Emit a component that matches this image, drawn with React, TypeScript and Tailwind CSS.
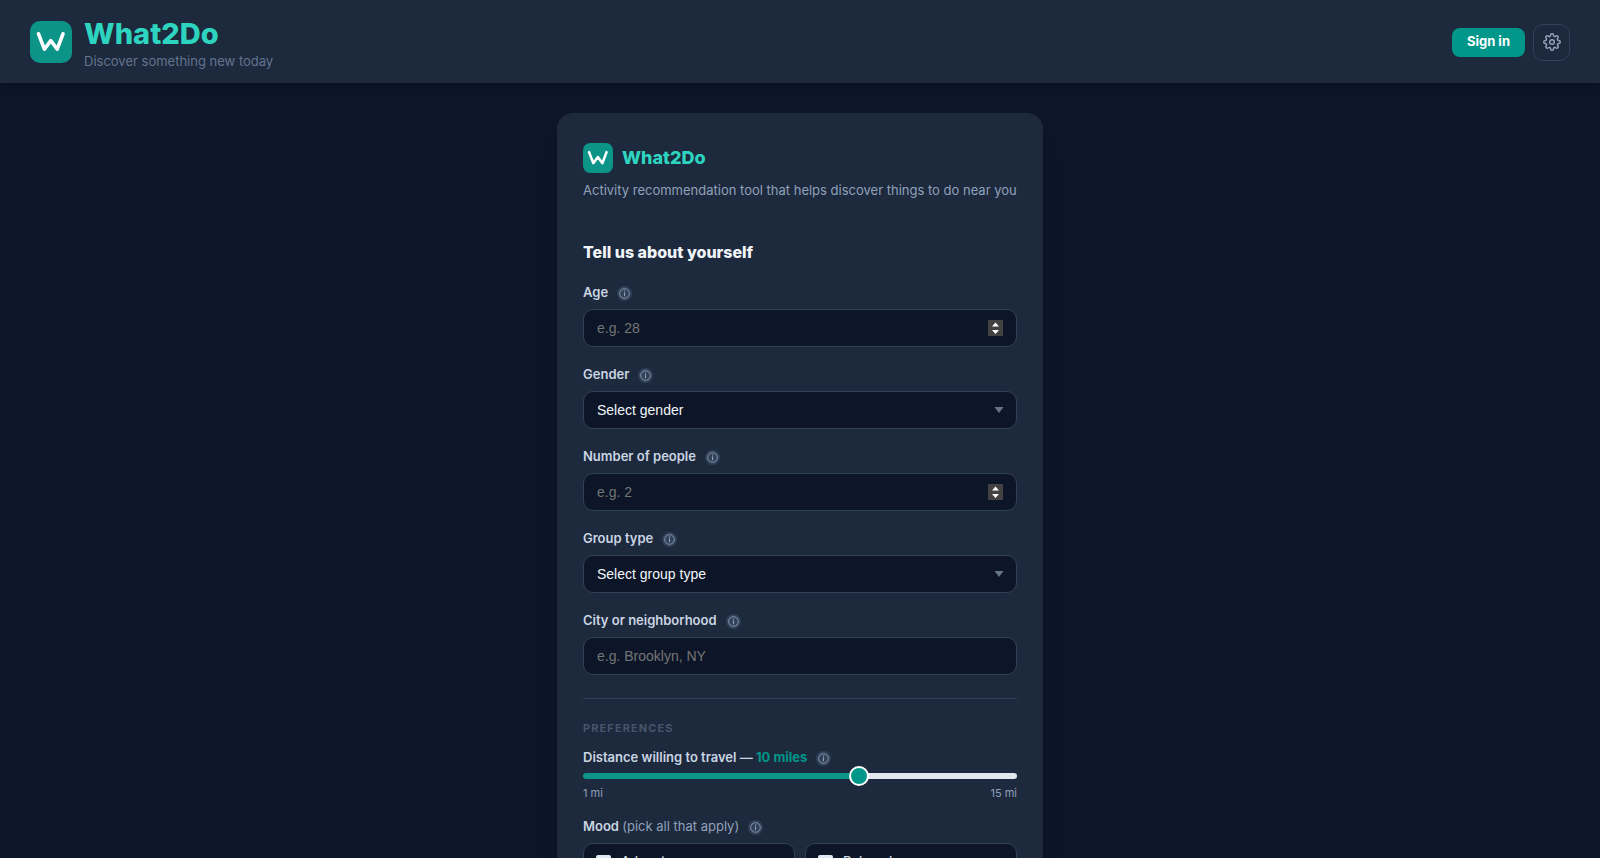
import { useState } from 'react'
import type { ReactNode } from 'react'

const MIN_MILES = 1
const MAX_MILES = 15

const MOODS = ['Adventurous', 'Relaxed', 'Social', 'Romantic', 'Creative', 'Curious']

const FIELD =
  'block h-[38px] w-full rounded-[10px] border border-slate-700 bg-[#0c1628] px-[13px] font-["Liberation_Sans",Arial,sans-serif] text-sm text-slate-100 placeholder:text-[#757575] focus:border-teal-500 focus:outline-none'

function Logo({ className }: { className: string }) {
  return (
    <svg viewBox="0 0 42 42" className={className} aria-hidden="true">
      <rect width="42" height="42" rx="10" fill="#0d9488" />
      <path
        d="M8.5 12.8 L14.4 28.2 L20.8 19.6 L27.2 28.2 L33 12.8"
        fill="none"
        stroke="#fff"
        strokeWidth="3.6"
        strokeLinecap="round"
        strokeLinejoin="round"
      />
    </svg>
  )
}

function InfoButton({ about }: { about: string }) {
  return (
    <button
      type="button"
      aria-label={`About ${about}`}
      className="flex size-[15px] shrink-0 items-center justify-center self-center rounded-full bg-slate-700 text-slate-400"
    >
      <svg viewBox="0 0 11 11" className="size-[11px]" fill="none" stroke="currentColor">
        <circle cx="5.5" cy="5.5" r="4.8" strokeWidth="0.9" />
        <path d="M5.5 4.3V8.3" strokeWidth="1.1" />
        <circle cx="5.5" cy="2.9" r="0.7" fill="currentColor" stroke="none" />
      </svg>
    </button>
  )
}

function FieldLabel({ id, about, children }: { id?: string; about: string; children: ReactNode }) {
  return (
    <div className="flex h-5 items-start gap-[9px]">
      <label htmlFor={id} className="text-[13px] leading-[18px] font-semibold text-slate-300">
        {children}
      </label>
      <InfoButton about={about} />
    </div>
  )
}

function NumberField({ id, label, placeholder }: { id: string; label: string; placeholder: string }) {
  return (
    <div className="flex flex-col gap-1.5">
      <FieldLabel id={id} about={label}>{label}</FieldLabel>
      <div className="relative">
        <input
          id={id}
          type="number"
          min={1}
          placeholder={placeholder}
          className={`${FIELD} [appearance:textfield] [&::-webkit-inner-spin-button]:appearance-none`}
        />
        <svg
          viewBox="0 0 15 16"
          className="pointer-events-none absolute top-[11px] right-[14px] h-4 w-[15px]"
          aria-hidden="true"
        >
          <rect width="15" height="16" fill="#424242" />
          <path d="M4 6.5 7.5 2.5 11 6.5ZM4 10 7.5 14 11 10Z" fill="#fff" />
        </svg>
      </div>
    </div>
  )
}

function SelectField({ id, label, options }: { id: string; label: string; options: string[] }) {
  return (
    <div className="flex flex-col gap-1.5">
      <FieldLabel id={id} about={label}>{label}</FieldLabel>
      <div className="relative">
        <select id={id} className={`${FIELD} appearance-none`}>
          {options.map((option) => (
            <option key={option}>{option}</option>
          ))}
        </select>
        <svg
          viewBox="0 0 10 6"
          className="pointer-events-none absolute top-4 right-[13px] h-1.5 w-2.5"
          aria-hidden="true"
        >
          <path d="M0.5 0h9L5 6Z" fill="#64748b" />
        </svg>
      </div>
    </div>
  )
}

function Header() {
  return (
    <header className="flex shrink-0 items-center justify-between bg-slate-800 px-[30px] pt-[15px] pb-3.5 shadow-md">
      <div className="flex items-center gap-3">
        <Logo className="size-[42px]" />
        <div>
          <h1 className="text-[29px] leading-[38px] font-extrabold text-[#2dd4bf]">What2Do</h1>
          <p className="text-[13px] leading-4 text-slate-500">Discover something new today</p>
        </div>
      </div>
      <div className="flex items-center gap-2">
        <button className="h-[29px] rounded-lg bg-teal-600 px-[15px] text-[13px] font-bold text-white hover:bg-teal-500">
          Sign in
        </button>
        <button
          aria-label="Settings"
          className="flex size-[37px] items-center justify-center rounded-[10px] border border-slate-700 text-slate-400 hover:text-slate-200"
        >
          <svg
            viewBox="0 0 24 24"
            className="size-[18px]"
            fill="none"
            stroke="currentColor"
            strokeWidth="2"
            strokeLinecap="round"
            strokeLinejoin="round"
          >
            <circle cx="12" cy="12" r="3" />
            <path d="M19.4 15a1.65 1.65 0 0 0 .33 1.82l.06.06a2 2 0 0 1 0 2.83 2 2 0 0 1-2.83 0l-.06-.06a1.65 1.65 0 0 0-1.82-.33 1.65 1.65 0 0 0-1 1.51V21a2 2 0 0 1-2 2 2 2 0 0 1-2-2v-.09A1.65 1.65 0 0 0 9 19.4a1.65 1.65 0 0 0-1.82.33l-.06.06a2 2 0 0 1-2.83 0 2 2 0 0 1 0-2.83l.06-.06a1.65 1.65 0 0 0 .33-1.82 1.65 1.65 0 0 0-1.51-1H3a2 2 0 0 1-2-2 2 2 0 0 1 2-2h.09A1.65 1.65 0 0 0 4.6 9a1.65 1.65 0 0 0-.33-1.82l-.06-.06a2 2 0 0 1 0-2.83 2 2 0 0 1 2.83 0l.06.06a1.65 1.65 0 0 0 1.82.33H9a1.65 1.65 0 0 0 1-1.51V3a2 2 0 0 1 2-2 2 2 0 0 1 2 2v.09a1.65 1.65 0 0 0 1 1.51 1.65 1.65 0 0 0 1.82-.33l.06-.06a2 2 0 0 1 2.83 0 2 2 0 0 1 0 2.83l-.06.06a1.65 1.65 0 0 0-.33 1.82V9a1.65 1.65 0 0 0 1.51 1H21a2 2 0 0 1 2 2 2 2 0 0 1-2 2h-.09a1.65 1.65 0 0 0-1.51 1z" />
          </svg>
        </button>
      </div>
    </header>
  )
}

function DistanceSlider() {
  const [miles, setMiles] = useState(10)
  const ratio = (miles - MIN_MILES) / (MAX_MILES - MIN_MILES)
  const filled = `${ratio * 100}%`

  return (
    <div className="mt-3">
      <FieldLabel id="distance" about="distance">
        Distance willing to travel — <span className="font-bold text-teal-600">{miles} miles</span>
      </FieldLabel>
      <input
        id="distance"
        type="range"
        min={MIN_MILES}
        max={MAX_MILES}
        value={miles}
        onChange={(e) => setMiles(Number(e.target.value))}
        className="mt-[5px] block h-1.5 w-full cursor-pointer appearance-none rounded-full [&::-webkit-slider-thumb]:size-5 [&::-webkit-slider-thumb]:appearance-none [&::-webkit-slider-thumb]:rounded-full [&::-webkit-slider-thumb]:border-2 [&::-webkit-slider-thumb]:border-solid [&::-webkit-slider-thumb]:border-white [&::-webkit-slider-thumb]:bg-teal-600"
        style={{ background: `linear-gradient(to right, #0d9488 ${filled}, #e2e8f0 ${filled})` }}
      />
      <div className="mt-1.5 flex justify-between text-[11px] leading-4 text-slate-400">
        <span>{MIN_MILES} mi</span>
        <span>{MAX_MILES} mi</span>
      </div>
    </div>
  )
}

function MoodPicker() {
  return (
    <div className="mt-4 flex flex-col gap-1.5">
      <FieldLabel about="mood">
        Mood <span className="font-normal text-slate-400">(pick all that apply)</span>
      </FieldLabel>
      <div className="grid grid-cols-2 gap-2.5">
        {MOODS.map((mood) => (
          <label
            key={mood}
            className="flex h-[38px] items-center gap-2.5 rounded-[10px] border border-slate-700 bg-[#0c1628] px-3 text-[13px] font-medium text-slate-300"
          >
            <input type="checkbox" className="size-[15px] appearance-none rounded-xs bg-slate-200 checked:bg-teal-600" />
            {mood}
          </label>
        ))}
      </div>
    </div>
  )
}

export default function App() {
  return (
    <div className="flex h-screen flex-col overflow-hidden bg-[#0c1628] font-[Inter,sans-serif]">
      <Header />
      <main className="flex-1 overflow-y-auto px-4 py-[30px] [scrollbar-width:none]">
        <form className="mx-auto w-full max-w-[486px] rounded-2xl bg-slate-800 px-[26px] py-[30px] shadow-xl">
          <div className="flex items-center gap-[9px]">
            <Logo className="size-[30px]" />
            <span className="text-lg leading-6 font-extrabold text-[#2dd4bf]">What2Do</span>
          </div>
          <p className="mt-[7px] text-[13px] leading-5 text-slate-400">
            Activity recommendation tool that helps discover things to do near you
          </p>

          <h2 className="mt-10 text-base leading-6 font-extrabold text-slate-100">Tell us about yourself</h2>
          <div className="mt-[19px] flex flex-col gap-[18px]">
            <NumberField id="age" label="Age" placeholder="e.g. 28" />
            <SelectField id="gender" label="Gender" options={['Select gender', 'Female', 'Male', 'Other']} />
            <NumberField id="people" label="Number of people" placeholder="e.g. 2" />
            <SelectField
              id="group"
              label="Group type"
              options={['Select group type', 'Solo', 'Couple', 'Friends', 'Family']}
            />
            <div className="flex flex-col gap-1.5">
              <FieldLabel id="city" about="city">City or neighborhood</FieldLabel>
              <input id="city" type="text" placeholder="e.g. Brooklyn, NY" className={FIELD} />
            </div>
          </div>

          <hr className="mt-[23px] border-slate-700" />
          <h3 className="mt-[21px] text-[11px] leading-4 font-bold tracking-widest text-slate-600 uppercase">
            Preferences
          </h3>
          <DistanceSlider />
          <MoodPicker />
        </form>
      </main>
    </div>
  )
}
